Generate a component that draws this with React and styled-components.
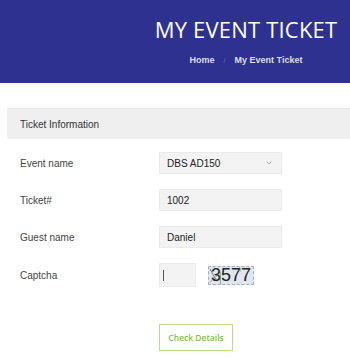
import React from "react";
import styled, { createGlobalStyle } from "styled-components";

const Global = createGlobalStyle`
  html, body { margin: 0; padding: 0; background: #ffffff; }
  body { font-family: "Liberation Sans", Arial, sans-serif; }
`;

const Header = styled.header`
  height: 83px;
  background: #2f3191;
  display: flex;
  justify-content: flex-end;
`;

const HeaderInner = styled.div`
  width: 208px;
  display: flex;
  flex-direction: column;
  align-items: center;
  padding-top: 14px;
  box-sizing: border-box;
`;

const Title = styled.h1`
  margin: 0;
  font-family: "Open Sans", sans-serif;
  font-weight: 400;
  font-size: 22px;
  line-height: 30px;
  color: #ffffff;
  white-space: nowrap;
  letter-spacing: 0.2px;
`;

const Crumbs = styled.nav`
  margin-top: 11px;
  display: flex;
  gap: 9px;
  align-items: center;
  font-family: "Liberation Sans", Arial, sans-serif;
  font-weight: 700;
  font-size: 9px;
  color: #dcdcf2;
`;

const Sep = styled.span`
  color: #6a6cb0;
  font-weight: 400;
  font-size: 7px;
`;

const Main = styled.main`
  padding: 25px 0 0 7px;
`;

const PanelHead = styled.div`
  height: 31px;
  background: #efefef;
  border-top: 1px solid #e8e8e8;
  box-sizing: border-box;
  display: flex;
  align-items: center;
  padding-left: 13px;
  font-size: 10px;
  color: #333;
`;

const Form = styled.div`
  display: flex;
  flex-direction: column;
  padding-top: 13px;
  gap: 15px;
`;

const Row = styled.div`
  display: grid;
  grid-template-columns: 139px 1fr;
  align-items: center;
  padding-left: 13px;
`;

const Label = styled.label`
  font-size: 10px;
  color: #444;
`;

const Field = styled.div`
  width: 123px;
  height: 22px;
  box-sizing: border-box;
  background: #f3f3f3;
  border: 1px solid #ebebeb;
  display: flex;
  align-items: center;
  justify-content: space-between;
  padding: 0 9px 0 7px;
  font-size: 10px;
  color: #222;
`;

const Chevron = styled.svg`
  width: 6px;
  height: 4px;
`;

const CaptchaWrap = styled.div`
  display: flex;
  align-items: center;
  gap: 12px;
`;

const CaptchaInput = styled.div`
  width: 37px;
  height: 24px;
  box-sizing: border-box;
  background: #f3f3f3;
  border: 1px solid #ebebeb;
  display: flex;
  align-items: center;
  padding-left: 3px;
`;

const Caret = styled.span`
  width: 1px;
  height: 11px;
  background: #555;
`;

const CaptchaImg = styled.div`
  position: relative;
  width: 46px;
  height: 19px;
  box-sizing: border-box;
  background: #e1e6ee;
  border: 1px dashed #9fb0cc;
  display: flex;
  align-items: center;
  justify-content: center;
  font-family: "Liberation Sans", Arial, sans-serif;
  font-size: 18px;
  line-height: 19px;
  color: #222;
  overflow: hidden;
`;

const Noise = styled.svg`
  position: absolute;
  inset: 0;
  width: 100%;
  height: 100%;
`;

const ButtonRow = styled.div`
  padding: 37px 0 0 152px;
`;

const Button = styled.button`
  width: 74px;
  height: 27px;
  background: #ffffff;
  border: 1px solid #b9dc94;
  color: #86bd4f;
  font-family: "Open Sans", sans-serif;
  font-weight: 600;
  font-size: 8.5px;
  padding: 0;
  cursor: pointer;
`;

export default function App() {
  return (
    <>
      <Global />
      <Header>
        <HeaderInner>
          <Title>MY EVENT TICKET</Title>
          <Crumbs>
            <span>Home</span>
            <Sep>/</Sep>
            <span>My Event Ticket</span>
          </Crumbs>
        </HeaderInner>
      </Header>
      <Main>
        <PanelHead>Ticket Information</PanelHead>
        <Form>
          <Row>
            <Label>Event name</Label>
            <Field>
              <span>DBS AD150</span>
              <Chevron viewBox="0 0 6 4">
                <path d="M0.5 0.5 L3 3 L5.5 0.5" fill="none" stroke="#999" strokeWidth="0.8" />
              </Chevron>
            </Field>
          </Row>
          <Row>
            <Label>Ticket#</Label>
            <Field>1002</Field>
          </Row>
          <Row>
            <Label>Guest name</Label>
            <Field>Daniel</Field>
          </Row>
          <Row>
            <Label>Captcha</Label>
            <CaptchaWrap>
              <CaptchaInput>
                <Caret />
              </CaptchaInput>
              <CaptchaImg>
                3577
                <Noise viewBox="0 0 46 19" preserveAspectRatio="none">
                  <path d="M1 2 L8 16" stroke="#445" strokeWidth="0.7" />
                  <path d="M1 17 L9 9" stroke="#667" strokeWidth="0.6" />
                  <path d="M12 6 L12 19" stroke="#3fae4a" strokeWidth="0.8" />
                  <path d="M32 0 L33 5" stroke="#3fae4a" strokeWidth="0.6" />
                </Noise>
              </CaptchaImg>
            </CaptchaWrap>
          </Row>
        </Form>
        <ButtonRow>
          <Button>Check Details</Button>
        </ButtonRow>
      </Main>
    </>
  );
}
